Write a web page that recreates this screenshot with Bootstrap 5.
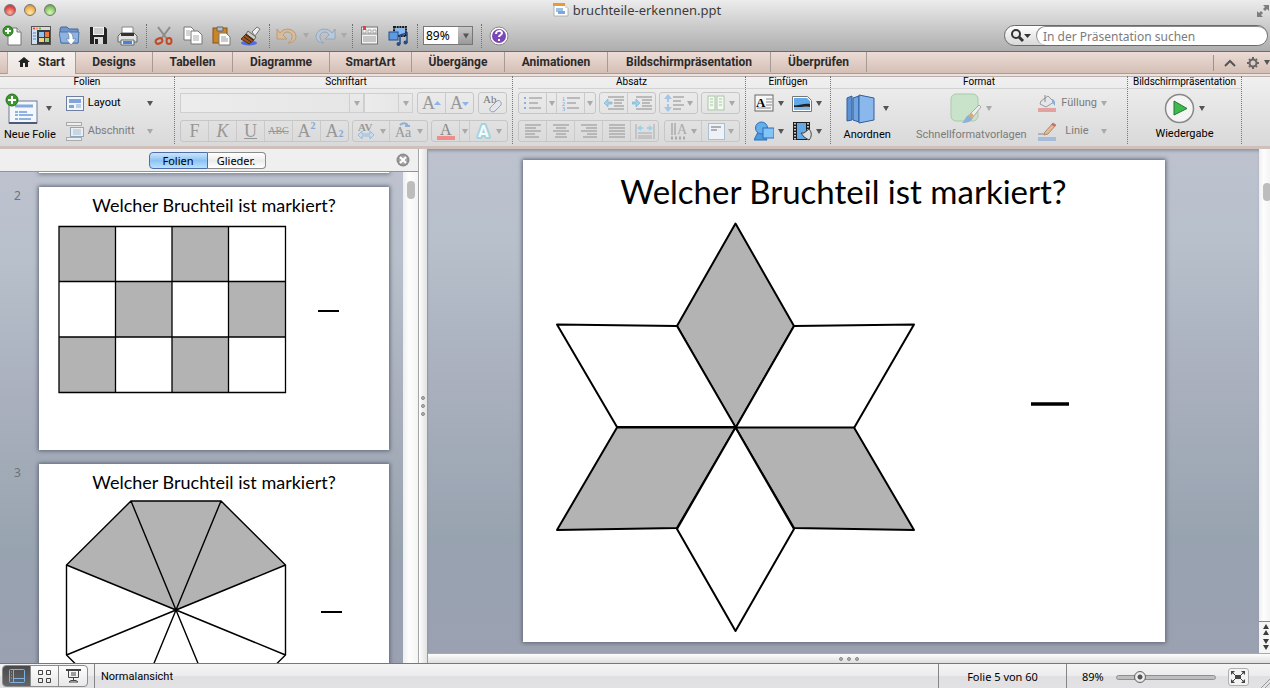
<!DOCTYPE html>
<html lang="de">
<head>
<meta charset="utf-8">
<meta name="viewport" content="width=device-width, initial-scale=1">
<title>bruchteile-erkennen.ppt</title>
<link href="https://cdn.jsdelivr.net/npm/bootstrap@5.3.0/dist/css/bootstrap.min.css" rel="stylesheet">
<style>
  body { font-family: "Noto Sans", "Open Sans", sans-serif; font-size: 11px; line-height: 14px; color: #000; background: #e4e4e4; }
  button { font: inherit; color: inherit; background: none; border: 0; padding: 0; }
  svg { display: block; flex: none; }
  .even { flex: 1 1 0; }
  .chrome { background: linear-gradient(#ececec, #c9c9c9 55%, #aeaeae); border-bottom: 1px solid #6b6b6b; }
  .title-row { height: 20px; font-size: 13px; line-height: 18px; color: #3c3c3c; }
  .light { width: 12px; height: 12px; border-radius: 50%; border: 1px solid #777; }
  .light-r { background: radial-gradient(circle at 50% 75%, #ffb3a8, #e04a44 60%, #a83a36); }
  .light-y { background: radial-gradient(circle at 50% 75%, #ffe7a8, #efae50 60%, #b27d30); }
  .light-g { background: radial-gradient(circle at 50% 75%, #d8f7b8, #85c462 60%, #558a3c); }
  .tool-row { height: 31px; }
  .tool { width: 29px; height: 26px; display: flex; align-items: center; justify-content: center; flex: none; }
  .tool:first-child { width: 26px; }
  .tool-drop { width: 9px; height: 26px; display: flex; align-items: center; justify-content: center; }
  .vdots { width: 5px; height: 24px; border-right: 1px dotted #6f6f6f; flex: none; margin-right: 2px; }
  .dn { display: inline-block; width: 0; height: 0; border: 3px solid transparent; border-top: 5px solid #555; border-bottom: 0; flex: none; }
  .dn.dim { border-top-color: #a9a9a9; }
  .zoom-box { margin-left: -3px; }
  .zoom-select { width: 50px; height: 19px; border: 1px solid #777; font-size: 12px; padding: 0 2px; appearance: none; color: #000;
    background: linear-gradient(#c9c9c9, #999) right / 14px 100% no-repeat, #fff; }
  .search-box { width: 264px; height: 21px; border: 1px solid #6a6a6a; border-radius: 11px; background: linear-gradient(#fff, #d8d8d8); margin-right: 2px; }
  .search-box input { border: 1px solid #8a8a8a; border-width: 1px 0 0 1px; border-radius: 10px; height: 19px; font-size: 12px; padding: 0 6px; background: #fff; outline: 0; margin-left: 2px; }
  .search-box input::placeholder { color: #7c7c7c; }
  .tab-row { height: 22px; background: linear-gradient(#ecdcd5, #d4bfb6); border-bottom: 1px solid #ab9b94; padding-left: 7px; }
  .rtab { height: 20px; padding: 0; font-family: Roboto, sans-serif; font-size: 12px; font-weight: 700; color: #2b2b2b; border-right: 1px solid #a59a96; text-decoration: none; display: flex; align-items: center; justify-content: center; flex: none; }
  .rtab.sel { background: linear-gradient(#f6f2f0, #ebe3df); height: 22px; padding-bottom: 2px; border-left: 1px solid #b9aaa4; }
  .w67 { width: 69px; } .w77 { width: 77px; } .w80 { width: 80px; } .w97 { width: 97px; } .w82 { width: 82px; } .w93 { width: 93px; } .w103 { width: 103px; } .w163 { width: 163px; } .w96 { width: 96px; }
  .ribbon { height: 75px; font-family: Roboto, sans-serif; background: linear-gradient(#f0f0f0, #d9d9d9); border-top: 2px solid #ece2de; border-bottom: 3px solid #cfc0bb; box-shadow: inset 0 1px #b9b0ad; }
  .group { border-right: 1px dotted #777; height: 68px; flex: none; }
  .group > h2 { font-size: 10px; font-weight: 400; line-height: 12px; height: 13px; margin: 0; text-align: center; border-bottom: 1px solid #d2d2d2; white-space: nowrap; }
  .g1 { width: 175px; } .g2 { width: 338px; } .g3 { width: 233px; } .g4 { width: 85px; } .g5 { width: 297px; } .g6 { width: 114px; }
  .g2, .g3 { padding-left: 5px; }
  .rows { display: flex; flex-direction: column; gap: 6px; padding-top: 3px; }
  .rows-slide { padding-left: 10px; padding-right: 21px; }
  .rows-fill { padding-left: 4px; padding-right: 20px; }
  .rrow { height: 22px; }
  .sets { display: flex; gap: 3px; }
  .sets.loose { gap: 5px; }
  .bset { display: flex; height: 22px; border: 1px solid #c6c6c6; border-radius: 3px; flex: none; }
  .bset > button { width: 28px; display: flex; align-items: center; justify-content: center; border-right: 1px solid #cacaca; gap: 3px; font-family: "Liberation Serif", serif; font-size: 18px; line-height: 18px; color: #979797; }
  .bset > button:last-child { border-right: 0; width: 27px; }
  .bset > button.arr, .bset > button.arr:last-child { width: 10px; }
  .bset > button.wide, .bset > button.wide:last-child { width: 37px; }
  .bset > button.abc { font-size: 10px; text-decoration: line-through; }
  .bset sup, .bset sub { font-size: 10px; line-height: 8px; color: #86a7d8; font-weight: 700; margin-left: -3px; }
  .combo { height: 20px; border: 1px solid #cfcfcf; background: linear-gradient(90deg, #ececec, #e6e6e6); border-radius: 0; appearance: none; padding: 0; flex: none; }
  .fontbox { width: 170px; } .sizebox { width: 35px; }
  .combo-arr { width: 14px; height: 20px; border: 1px solid #cfcfcf; border-left: 0; display: flex; align-items: center; justify-content: center; }
  .lbl-dim { color: #7b7b7b; }
  .big-btn { padding-top: 3px; }
  .big-ico { height: 32px; margin-bottom: 3px; display: flex; align-items: center; justify-content: center; }
  .arrange { width: 80px; } .styles { width: 126px; margin-left: 5px; flex: none; }
  .sidepane { width: 418px; flex: none; }
  .side-head { height: 23px; background: #efefef; border-bottom: 1px solid #949494; }
  .seg button { width: 59px; height: 17px; line-height: 15px; border: 1px solid #8b8b8b; background: linear-gradient(#fff, #ececec 50%, #fff); }
  .seg button.sel { background: linear-gradient(#cfe5fa, #8cc3f4 50%, #b9e2fd); border-color: #4d6ea8; border-radius: 4px 0 0 4px; }
  .seg button + button { border-left: 0; border-radius: 0 4px 4px 0; width: 58px; }
  .desk { background: linear-gradient(#bdc2ce, #b7c0cb 18%, #aab0be 45%, #98a3b0 78%, #9ba1b0); }
  .desk-main { box-shadow: inset 0 3px 3px -1px #8f95a5; }
  .thumbs { min-height: 0; }
  .thumb-no { width: 39px; padding: 2px 0 0 14px; font-size: 12px; color: #6f7279; flex: none; }
  .thumb-row { display: flex; flex: none; margin-top: 14px; }
  .sheet { background: #fff; box-shadow: 0 0 4px 1px #5f6675; flex: none; overflow: hidden; }
  .thumb { width: 350px; height: 263px; }
  .thumb-end { width: 350px; height: 1px; margin-left: 39px; }
  .thumb h3 { font: 400 18px/24px Lato, sans-serif; margin: 6px 0 0; text-align: center; }
  .main-sheet { width: 642px; height: 482px; }
  .main-sheet h1 { font: 400 33px/44px Lato, sans-serif; margin: 9px 0 0; text-align: center; }
  .scroll { background: linear-gradient(90deg, #eee, #fdfdfd 40%, #f4f4f4); flex: none; overflow: hidden; }
  .scroll-side { width: 15px; padding: 9px 0 0 4px; }
  .scroll-main { width: 11px; }
  .scroll-main .knob { margin: 34px 0 0 4px; }
  .knob { width: 8px; height: 18px; border-radius: 4px; background: #bdbdbd; flex: none; }
  .vsplit { width: 10px; background: linear-gradient(90deg, #fff, #f1f1f1 40%, #e3e3e3); border-left: 1px solid #a5a5a5; border-right: 1px solid #9a9a9a; flex: none; }
  .hsplit { height: 10px; background: linear-gradient(#fdfdfd, #dedede); border-top: 1px solid #aaa; flex: none; }
  .pip { width: 4px; height: 4px; border-radius: 50%; background: #b2b2b2; border: 1px solid #8a8a8a; }
  .status { height: 25px; border-top: 1px solid #777; background: linear-gradient(#f4f4f5, #ececee 49%, #e0e0e2 51%, #e2e2e4); flex: none; }
  .views { border: 1px solid #8c8c8c; border-radius: 4px; height: 22px; overflow: hidden; background: linear-gradient(#fdfdfd, #e8e8e8); margin: 0 6px 0 2px; }
  .views button { width: 28px; height: 100%; display: flex; align-items: center; justify-content: center; border-right: 1px solid #8c8c8c; }
  .views button:last-child { border-right: 0; }
  .views .sel { background: linear-gradient(#4a4a4c, #66666a); }
  .cell { border-left: 1px solid #858585; height: 100%; padding-top: 2px; display: flex; align-items: center; }
  .cell-view { font-family: Roboto, sans-serif; padding-left: 6px; }
  .cell-page { width: 128px; justify-content: center; }
  .cell-zoom { width: 204px; padding-left: 15px; gap: 12px; }
  .zoomer { appearance: none; width: 100px; height: 14px; background: none; margin: 0; }
  .zoomer::-webkit-slider-runnable-track { height: 5px; border-radius: 3px; border: 1px solid #8f8f8f; background: #bfbfbf; }
  .zoomer::-webkit-slider-thumb { appearance: none; width: 12px; height: 12px; margin-top: -5px; border-radius: 50%; border: 1px solid #666; background: radial-gradient(circle, #555 0 2px, #f4f4f4 3px, #d0d0d0); }
  .fit { width: 23px; height: 18px; border: 1px solid #b0b0b0; border-radius: 3px; background: #f3f3f3; display: flex; align-items: center; justify-content: center; }
  .nudge { height: 32px; border-top: 1px solid #888; background: #f5f5f5; }
</style>
</head>
<body class="vh-100 overflow-hidden d-flex flex-column">

<header class="chrome flex-shrink-0">
  <div class="title-row d-flex">
    <div class="even d-flex gap-2 ps-1 pt-1">
      <span class="light light-r"></span><span class="light light-y"></span><span class="light light-g"></span>
    </div>
    <div class="d-flex align-items-center gap-1">
      <svg width="16" height="14" viewBox="0 0 16 14"><path d="M1 2h11l3 3v8H1z" fill="#fff" stroke="#9aa" stroke-width=".8"/><path d="M0 0h12v3H0z" fill="#e99a33"/><path d="M12 0l3 5h-3z" fill="#ddd"/><rect x="3" y="5" width="7" height="4" fill="#9dbfe8"/><rect x="5" y="8" width="7" height="3" fill="#7da7dc"/></svg>
      <span>bruchteile-erkennen.ppt</span>
    </div>
    <div class="even d-flex justify-content-end pt-1">
      <svg width="14" height="14" viewBox="0 0 14 14" fill="#7d7d7d"><path d="M7 1h6v6l-2-2-2 2-2-2 2-2zM1 7l2 2 2-2 2 2-2 2 2 2H1z"/></svg>
    </div>
  </div>
  <div class="tool-row d-flex align-items-center">
    <button class="tool" aria-label="Neu"><svg width="22" height="22" viewBox="0 0 22 22"><path d="M6 3h9l4 4v13H6z" fill="#fff" stroke="#777"/><path d="M15 3v4h4" fill="#ddd" stroke="#777"/><circle cx="6" cy="6" r="5" fill="#3c9a2c" stroke="#26701b"/><path d="M6 3v6M3 6h6" stroke="#fff" stroke-width="2"/></svg></button>
    <button class="tool" aria-label="Vorlagen"><svg width="20" height="19" viewBox="0 0 20 19"><rect x=".5" y=".5" width="19" height="18" fill="#3b3b3f" stroke="#555"/><rect x="1" y="1" width="18" height="3" fill="#d9d9d9"/><circle cx="3" cy="2.500" r="1" fill="#d33"/><circle cx="6" cy="2.500" r="1" fill="#e93"/><circle cx="9" cy="2.500" r="1" fill="#5a3"/><rect x="1" y="4" width="5" height="14" fill="#cfe0f2"/><path d="M2 7h3M2 10h3M2 13h3" stroke="#5b87c0"/><rect x="8" y="6" width="5" height="5" fill="#8cc4f3"/><rect x="14" y="6" width="4" height="5" fill="#ee7741"/><rect x="8" y="12" width="5" height="4" fill="#f3d27a"/><rect x="14" y="12" width="4" height="4" fill="#9ccf7c"/></svg></button>
    <button class="tool" aria-label="Öffnen"><svg width="21" height="20" viewBox="0 0 21 20"><path d="M1 3l1-2h6l2 2h9v14H2z" fill="#6f97cb" stroke="#44669a"/><path d="M0 6h20l-1 11H2z" fill="#8fb3e0" stroke="#4f74a9"/><path d="M8 6c5 0 6 3 6 7h3l-5 6-5-6h3c0-3 0-5-2-7z" fill="#fff" stroke="#6a84a8" stroke-width=".7"/></svg></button>
    <button class="tool" aria-label="Speichern"><svg width="19" height="19" viewBox="0 0 19 19"><path d="M1 1h15l2 2v15H1z" fill="#232325"/><rect x="4" y="1" width="11" height="8" fill="#f0f0f0"/><path d="M5 3h9M5 5h9M5 7h9" stroke="#aaa"/><rect x="5" y="11" width="9" height="7" fill="#d9d9d9"/><rect x="6" y="13" width="3" height="5" fill="#222"/></svg></button>
    <button class="tool" aria-label="Drucken"><svg width="21" height="20" viewBox="0 0 21 20"><path d="M5 1h11v8H5z" fill="#fff" stroke="#888"/><path d="M1 10l3-3h13l3 3v6H1z" fill="#e2e2e2" stroke="#666"/><path d="M4 7h13v3H4z" fill="#333"/><path d="M4 14h13v5H4z" fill="#eef4fc" stroke="#666"/><path d="M6 15h9v3H6z" fill="#3f86d8"/></svg></button>
    <span class="vdots"></span>
    <button class="tool" aria-label="Ausschneiden"><svg width="20" height="20" viewBox="0 0 20 20" fill="none"><path d="M4 1l9 12M16 1L7 13" stroke="#8c8c8c" stroke-width="2"/><ellipse cx="5" cy="15" rx="3.500" ry="2.500" stroke="#c24a26" stroke-width="2" transform="rotate(-25 5 15)"/><ellipse cx="15" cy="15" rx="2.500" ry="3" stroke="#c24a26" stroke-width="2"/></svg></button>
    <button class="tool" aria-label="Kopieren"><svg width="20" height="19" viewBox="0 0 20 19" fill="#fff" stroke="#777"><path d="M1 1h7l3 3v10H1z"/><path d="M8 5h7l4 4v9H8z"/><path d="M3 5h4M3 7h4M3 9h4M10 10h6M10 12h6M10 14h6" stroke="#aaa"/></svg></button>
    <button class="tool" aria-label="Einfügen"><svg width="19" height="20" viewBox="0 0 19 20"><rect x="1" y="2" width="14" height="15" fill="#cc8526" stroke="#87530f"/><path d="M5 1h6v4H5z" fill="#bbb" stroke="#666"/><path d="M7 7h7l4 4v8H7z" fill="#fff" stroke="#777"/><path d="M9 11h5M9 13h7M9 15h7" stroke="#999"/></svg></button>
    <button class="tool" aria-label="Format übertragen"><svg width="21" height="20" viewBox="0 0 21 20"><ellipse cx="9" cy="17" rx="8" ry="2.500" fill="#4d6fe0"/><path d="M12 6l5-5 3 2-5 7z" fill="#eee" stroke="#777"/><path d="M8 5l8 6-2 3-8-6z" fill="#ccc" stroke="#666"/><path d="M6 8l8 6-5 4-8-5z" fill="#9b5520" stroke="#5d2f0c"/><path d="M4 11l7 5M6 9l7 5" stroke="#3c2410"/></svg></button>
    <span class="vdots"></span>
    <button class="tool" aria-label="Rückgängig"><svg width="22" height="18" viewBox="0 0 22 18"><path d="M1 2l3 4C8 0 19 1 20 9c0 4-3 7-8 7 5-2 6-10 0-11-3 0-4 1-5 3l4 4H1z" fill="#d7bb9a" stroke="#b99b78"/></svg></button>
    <button class="tool-drop" aria-label="Verlauf"><span class="dn dim"></span></button>
    <button class="tool" aria-label="Wiederholen"><svg width="22" height="18" viewBox="0 0 22 18"><path d="M21 2l-3 4C14 0 3 1 2 9c0 4 3 7 8 7-5-2-6-10 0-11 3 0 4 1 5 3l-4 4h10z" fill="#b9c9da" stroke="#92a6bb"/></svg></button>
    <button class="tool-drop" aria-label="Verlauf"><span class="dn dim"></span></button>
    <span class="vdots"></span>
    <button class="tool" aria-label="Formatierungspalette"><svg width="17" height="19" viewBox="0 0 17 19"><rect x=".5" y="1" width="16" height="17" fill="#f3f3f3" stroke="#777"/><path d="M1 8h15" stroke="#888"/><path d="M2 3h3v4H2zM7 4h3v3H7zM12 4h3v3h-3z" fill="#fff" stroke="#888" stroke-width=".7"/><path d="M2 0h3v4H2z" fill="#d44"/><path d="M2 11h13M2 13h13M2 15h13" stroke="#999"/></svg></button>
    <button class="tool" aria-label="Medien"><svg width="21" height="20" viewBox="0 0 21 20"><rect x="6" y="1" width="12" height="9" fill="#8ab8ee" stroke="#1a1a1a" stroke-width="2" stroke-dasharray="2 .7"/><rect x="1" y="6" width="9" height="8" fill="#5d9ae0" stroke="#234f8c"/><path d="M12 18V9l7-2v10" fill="none" stroke="#234d8a" stroke-width="1.500"/><circle cx="10.500" cy="18" r="2" fill="#234d8a"/><circle cx="17.500" cy="16.500" r="2" fill="#234d8a"/></svg></button>
    <span class="vdots me-2"></span>
    <div class="zoom-box position-relative">
      <select class="zoom-select d-block" aria-label="Zoom"><option>89%</option></select>
      <span class="dn position-absolute end-0 top-50 translate-middle-y me-1 pe-none"></span>
    </div>
    <span class="vdots ms-1"></span>
    <button class="tool" aria-label="Hilfe"><svg width="20" height="20" viewBox="0 0 20 20"><circle cx="10" cy="10" r="9" fill="#fff" stroke="#888"/><circle cx="10" cy="10" r="7" fill="#7a46b8"/><path d="M7 8c0-4 6-4 6-1 0 2-3 2-3 4M10 13v2" fill="none" stroke="#fff" stroke-width="2"/></svg></button>
    <div class="search-box d-flex align-items-center ms-auto">
      <svg class="ms-1" width="25" height="16" viewBox="0 0 25 16"><circle cx="7" cy="6" r="4" fill="none" stroke="#333" stroke-width="2"/><path d="M10 9l4 4" stroke="#333" stroke-width="3"/><path d="M15 6h7l-3.500 4z" fill="#333"/></svg>
      <input type="search" class="flex-grow-1" placeholder="In der Präsentation suchen" aria-label="In der Präsentation suchen">
    </div>
  </div>
</header>

<nav class="tab-row d-flex flex-shrink-0">
  <a href="#" class="rtab sel w67 gap-2"><svg width="12" height="10" viewBox="0 0 12 10"><path d="M6 0l6 5h-2v5H7V6H5v4H2V5H0z" fill="#222"/></svg>Start</a>
  <a href="#" class="rtab w77">Designs</a>
  <a href="#" class="rtab w80">Tabellen</a>
  <a href="#" class="rtab w97">Diagramme</a>
  <a href="#" class="rtab w82">SmartArt</a>
  <a href="#" class="rtab w93">Übergänge</a>
  <a href="#" class="rtab w103">Animationen</a>
  <a href="#" class="rtab w163">Bildschirmpräsentation</a>
  <a href="#" class="rtab w96">Überprüfen</a>
  <div class="ms-auto d-flex align-items-center">
    <button class="me-2" aria-label="Menüband ausblenden"><svg width="28" height="18" viewBox="0 0 28 18"><path d="M3.500 1v16" stroke="#9b918e"/><path d="M15 12l5-5 5 5" fill="none" stroke="#555" stroke-width="2"/></svg></button>
    <button class="d-flex align-items-center gap-1" aria-label="Einstellungen"><svg width="14" height="14" viewBox="0 0 14 14"><circle cx="7" cy="7" r="3.500" fill="none" stroke="#666" stroke-width="2"/><path d="M7 1v2M7 11v2M1 7h2M11 7h2M3 3l1 1M10 10l1 1M11 3l-1 1M3 11l1-1" stroke="#666" stroke-width="2"/></svg><span class="dn"></span></button>
  </div>
</nav>

<section class="ribbon d-flex flex-shrink-0">
  <div class="group g1">
    <h2>Folien</h2>
    <div class="d-flex">
      <button class="big-btn ps-1 text-nowrap text-start">
        <span class="big-ico justify-content-start gap-2"><svg width="34" height="32" viewBox="0 0 34 32"><rect x="5" y="8" width="28" height="22" fill="#f4f7fb" stroke="#6f7b97"/><path d="M5 30h28" stroke="#4e5a7c" stroke-width="2"/><path d="M11 13h18" stroke="#86a9dd" stroke-width="3"/><path d="M11 19h3M11 22h3M11 26h3M15 19h8M15 22h14M15 26h12" stroke="#6e9bd9" stroke-width="1.500"/><circle cx="8" cy="7" r="6" fill="#3c9a2c" stroke="#26701b"/><path d="M8 3v8M4 7h8" stroke="#fff" stroke-width="2"/></svg><span class="dn"></span></span>
        <span class="d-block">Neue Folie</span>
      </button>
      <div class="rows rows-slide flex-grow-1">
        <button class="rrow d-flex align-items-center gap-1"><svg width="18" height="15" viewBox="0 0 18 15"><rect x=".5" y=".5" width="17" height="14" fill="#f2f6fb" stroke="#6c7f9f"/><path d="M3 3h12v4H3zM3 9h5v3H3z" fill="#7fa5dc"/><path d="M10 9h5M10 11h5" stroke="#7fa5dc"/></svg><span>Layout</span><span class="dn ms-auto"></span></button>
        <button class="rrow d-flex align-items-center gap-1 lbl-dim"><svg width="18" height="19" viewBox="0 0 18 19" fill="#eee" stroke="#aaa"><rect x=".5" y=".5" width="15" height="3"/><rect x="4.500" y="5.500" width="13" height="9" stroke="#8fa6bd"/><rect x=".5" y="15.500" width="15" height="3"/><path d="M7 8h8M7 10h8M7 12h8" stroke="#9dc0d8"/></svg><span>Abschnitt</span><span class="dn dim ms-auto"></span></button>
      </div>
    </div>
  </div>

  <div class="group g2">
    <h2>Schriftart</h2>
    <div class="rows">
    <div class="rrow d-flex align-items-center">
      <input class="combo fontbox" aria-label="Schriftart"><button class="combo-arr" aria-label="Schriftart wählen"><span class="dn dim"></span></button>
      <input class="combo sizebox" aria-label="Schriftgrad"><button class="combo-arr" aria-label="Schriftgrad wählen"><span class="dn dim"></span></button>
      <div class="bset ms-1"><button aria-label="Schrift vergrößern"><svg width="20" height="18" viewBox="0 0 20 18"><text x="0" y="15" font-size="18" fill="#979797">A</text><path d="M12 11l3.500-4 3.500 4z" fill="#8fb3e6"/></svg></button><button aria-label="Schrift verkleinern"><svg width="20" height="18" viewBox="0 0 20 18"><text x="0" y="15" font-size="18" fill="#979797">A</text><path d="M12 8l3.500 4L19 8z" fill="#8fb3e6"/></svg></button></div>
      <div class="bset ms-1"><button aria-label="Formatierung löschen"><svg width="20" height="19" viewBox="0 0 20 19"><text x="0" y="9" font-size="11" fill="#777">Ab</text><path d="M7 14l7-7c3-2 5 2 4 4l-6 6c-3 2-6 0-5-3z" fill="#e5e6ec" stroke="#999faf"/></svg></button></div>
    </div>
    <div class="sets">
      <div class="bset"><button>F</button><button><i>K</i></button><button><u>U</u></button><button class="abc">ABC</button><button>A<sup>2</sup></button><button>A<sub>2</sub></button></div>
      <div class="bset"><button class="wide" aria-label="Zeichenabstand"><svg width="20" height="18" viewBox="0 0 20 18"><text x="1" y="9" font-size="11" font-weight="700" fill="#999">AV</text><path d="M1 13l4-4v3h8V9l4 4-4 4v-3H5v3z" fill="#c6dcf0" stroke="#91b1d6" stroke-width=".8"/></svg><span class="dn dim"></span></button><button class="wide" aria-label="Groß-/Kleinschreibung"><svg width="20" height="20" viewBox="0 0 20 20"><text x="1" y="16" font-size="14" fill="#999">Aa</text><path d="M6 4c3-3 7-2 8 1M11 5h5" fill="none" stroke="#8db0d8" stroke-width="2"/></svg><span class="dn dim"></span></button></div>
      <div class="bset"><button aria-label="Schriftfarbe"><svg width="18" height="20" viewBox="0 0 18 20"><text x="3" y="14" font-size="16" fill="#888">A</text><rect y="15" width="18" height="4" fill="#ee8d8a"/></svg></button><button class="arr" aria-label="Farbe wählen"><span class="dn dim"></span></button><button class="wide" aria-label="Texteffekte"><svg width="18" height="18" viewBox="0 0 18 18"><text x="3" y="15" font-size="16" font-weight="700" font-family="Roboto" fill="#f4fbfc" stroke="#a5d3dd" stroke-width="4" stroke-linejoin="round" paint-order="stroke">A</text></svg><span class="dn dim"></span></button></div>
    </div>
    </div>
  </div>

  <div class="group g3">
    <h2>Absatz</h2>
    <div class="rows">
    <div class="sets">
      <div class="bset"><button aria-label="Aufzählung"><svg width="18" height="14" viewBox="0 0 18 14"><path d="M0 2h2M0 7h2M0 12h2" stroke="#8caede" stroke-width="2"/><path d="M5 2h13M5 7h9M5 12h12" stroke="#aaa" stroke-width="1.500"/></svg></button><button class="arr" aria-label="Aufzählung wählen"><span class="dn dim"></span></button><button aria-label="Nummerierung"><svg width="18" height="15" viewBox="0 0 18 15"><text y="5" font-size="6" fill="#6c9be0">1</text><text y="10" font-size="6" fill="#6c9be0">2</text><text y="15" font-size="6" fill="#6c9be0">3</text><path d="M5 2h13M5 7h9M5 12h12" stroke="#aaa" stroke-width="1.500"/></svg></button><button class="arr" aria-label="Nummerierung wählen"><span class="dn dim"></span></button></div>
      <div class="bset"><button aria-label="Einzug verkleinern"><svg width="20" height="14" viewBox="0 0 20 14"><path d="M4 1h16M10 4h10M10 7h8M10 10h10M4 13h16" stroke="#aaa" stroke-width="1.500"/><path d="M0 7l4-4v3h4v2H4v3z" fill="#9dd0ea" stroke="#76aed0" stroke-width=".6"/></svg></button><button aria-label="Einzug vergrößern"><svg width="20" height="14" viewBox="0 0 20 14"><path d="M4 1h16M10 4h10M10 7h8M10 10h10M4 13h16" stroke="#aaa" stroke-width="1.500"/><path d="M8 7L4 3v3H0v2h4v3z" fill="#9dd0ea" stroke="#76aed0" stroke-width=".6"/></svg></button></div>
      <div class="bset"><button class="wide" aria-label="Zeilenabstand"><svg width="20" height="18" viewBox="0 0 20 18"><path d="M4 0l4 5H5v3H3V5H0zM4 18l4-5H5v-3H3v3H0z" fill="#a5c6e5"/><path d="M9 3h11M9 7h8M9 11h11M9 15h8" stroke="#aaa" stroke-width="1.500"/></svg><span class="dn dim"></span></button></div>
      <div class="bset"><button class="wide" aria-label="Spalten"><svg width="19" height="16" viewBox="0 0 19 16" fill="#f5f7f4" stroke="#a6c8a0"><rect x="1" y="1" width="7" height="14"/><rect x="10" y="1" width="7" height="14"/><path d="M3 4h3M3 7h3M3 10h3M12 4h3M12 7h3M12 10h3"/></svg><span class="dn dim"></span></button></div>
    </div>
    <div class="sets loose">
      <div class="bset">
        <button aria-label="Linksbündig"><svg width="16" height="14" viewBox="0 0 16 14" stroke="#aaa" stroke-width="1.500"><path d="M0 1h16M0 4h11M0 7h16M0 10h10M0 13h14"/></svg></button>
        <button aria-label="Zentriert"><svg width="16" height="14" viewBox="0 0 16 14" stroke="#aaa" stroke-width="1.500"><path d="M0 1h16M3 4h10M0 7h16M3 10h10M2 13h12"/></svg></button>
        <button aria-label="Rechtsbündig"><svg width="16" height="14" viewBox="0 0 16 14" stroke="#aaa" stroke-width="1.500"><path d="M0 1h16M5 4h11M0 7h16M6 10h10M2 13h14"/></svg></button>
        <button aria-label="Blocksatz"><svg width="16" height="14" viewBox="0 0 16 14" stroke="#aaa" stroke-width="1.500"><path d="M0 1h16M0 4h16M0 7h16M0 10h16M0 13h16"/></svg></button>
        <button aria-label="Verteilt"><svg width="20" height="15" viewBox="0 0 20 15"><path d="M1 0v15M19 0v15" stroke="#aaa"/><path d="M2 4l4-3v2h2v2H6v2zM18 4l-4-3v2h-2v2h2v2z" fill="#9dd0ea"/><path d="M3 9h14M3 12h14M3 14h14" stroke="#aaa"/></svg></button>
      </div>
      <div class="bset"><button class="wide" aria-label="Textrichtung"><svg width="18" height="17" viewBox="0 0 18 17"><path d="M2 0v12M5 0v12" stroke="#aaa" stroke-width="1.500"/><text x="7" y="11" font-size="14" fill="#aaa">A</text><path d="M1 15h16" stroke="#aaa" stroke-width="3" stroke-dasharray="2"/></svg><span class="dn dim"></span></button><button class="wide" aria-label="Text ausrichten"><svg width="17" height="17" viewBox="0 0 17 17"><rect x=".5" y=".5" width="16" height="16" fill="#eef1f5" stroke="#a9bfd6"/><path d="M3 4h10M3 7h6" stroke="#999" stroke-width="1.500"/></svg><span class="dn dim"></span></button></div>
    </div>
    </div>
  </div>

  <div class="group g4">
    <h2>Einfügen</h2>
    <div class="rows px-1">
      <div class="d-flex justify-content-around">
      <button class="d-flex align-items-center gap-1 rrow" aria-label="Textfeld"><svg width="20" height="18" viewBox="0 0 20 18"><rect x="1" y="1" width="18" height="16" fill="#f6f6f6" stroke="#666"/><text x="2" y="13" font-size="13" font-weight="700" font-family="Liberation Serif">A</text><path d="M12 5h6M12 8h6M12 11h6M3 14h14" stroke="#888"/></svg><span class="dn"></span></button>
      <button class="d-flex align-items-center gap-1 rrow" aria-label="Bild"><svg width="20" height="17" viewBox="0 0 20 17"><path d="M.5 1.500h15l4 4v11H.5z" fill="#fff" stroke="#777"/><path d="M2 3h13l3 3v4H2z" fill="#5fa8ea"/><path d="M2 10c5 1 9-2 16-1v3c-6-1-10 1-16 0z" fill="#222"/><path d="M2 12h16v3H2z" fill="#78b8ee"/></svg><span class="dn"></span></button>
      </div>
      <div class="d-flex justify-content-around">
      <button class="d-flex align-items-center gap-1 rrow" aria-label="Form"><svg width="20" height="20" viewBox="0 0 20 20" stroke="#2a6fb5"><path d="M6 7L0 19h13z" fill="#4a9be0"/><circle cx="7.500" cy="7" r="6" fill="#64aeea"/><rect x="9" y="7" width="11" height="10" fill="#82c4f5"/></svg><span class="dn"></span></button>
      <button class="d-flex align-items-center gap-1 rrow" aria-label="Medien"><svg width="20" height="20" viewBox="0 0 20 20"><rect x="1" y="1" width="17" height="18" fill="#1d1d1d"/><rect x="5" y="2" width="9" height="16" fill="#62a9e6"/><path d="M3 2v17M16 2v17" stroke="#fff" stroke-width="1.500" stroke-dasharray="1.500"/><path d="M9 12h3l5-4c3 3 3 8 0 11l-5-3z" fill="#ddd" stroke="#444"/></svg><span class="dn"></span></button>
      </div>
    </div>
  </div>

  <div class="group g5">
    <h2>Format</h2>
    <div class="d-flex">
      <button class="big-btn arrange">
        <span class="big-ico gap-2"><svg width="30" height="30" viewBox="0 0 30 30" stroke="#2e5f9f"><path d="M2 4l5-2v24l-5 1z" fill="#5b92d6"/><path d="M8 4l6-2v26l-6-2z" fill="#6fa5e2"/><path d="M14 1l15 3v22l-15 3z" fill="#8bb8ec"/></svg><span class="dn"></span></span>
        <span class="d-block">Anordnen</span>
      </button>
      <button class="big-btn styles lbl-dim">
        <span class="big-ico gap-1"><svg width="32" height="31" viewBox="0 0 32 31"><rect x="1" y="1" width="27" height="27" rx="5" fill="#c9e2ca" stroke="#a5cda8"/><path d="M20 21l9-9 2 2-8 10z" fill="#eee" stroke="#aaa"/><path d="M12 30c3-2 3-7 7-8l4 3c-2 4-6 5-11 5z" fill="#8db0d8"/><path d="M18 22l4-2 2 3-2 3z" fill="#d9ab7c"/></svg><span class="dn dim"></span></span>
        <span class="d-block">Schnellformatvorlagen</span>
      </button>
      <div class="rows rows-fill flex-grow-1 lbl-dim">
        <button class="rrow d-flex align-items-center gap-1"><svg width="19" height="18" viewBox="0 0 19 18"><path d="M3 7l7-5 6 6-8 5-6-3z" fill="#e4e8ec" stroke="#999"/><path d="M7 1v7" stroke="#888"/><path d="M14 5c4 1 3 5 3 7l-3-4z" fill="#85aed7"/><rect y="14" width="18" height="4" fill="#e2a3a0"/></svg>Füllung<span class="dn dim ms-auto"></span></button>
        <button class="rrow d-flex align-items-center gap-1"><svg width="19" height="20" viewBox="0 0 19 20"><path d="M7 11l8-9 3 2-8 9-4 1z" fill="#e7b98f" stroke="#a98c7a"/><path d="M14 3l3 2" stroke="#c66" stroke-width="2"/><path d="M0 13h6" stroke="#888"/><rect y="16" width="18" height="4" fill="#a5bcdb"/></svg><span class="ms-1">Linie</span><span class="dn dim ms-auto"></span></button>
      </div>
    </div>
  </div>

  <div class="group g6">
    <h2>Bildschirmpräsentation</h2>
    <button class="big-btn d-block mx-auto">
      <span class="big-ico gap-1"><svg width="31" height="31" viewBox="0 0 31 31"><circle cx="15.500" cy="15.500" r="14" fill="#f4f4f4" stroke="#888" stroke-width="1.500"/><path d="M10 8l13 7.500L10 22z" fill="#3dbb4b" stroke="#27753a"/></svg><span class="dn"></span></span>
      <span class="d-block">Wiedergabe</span>
    </button>
  </div>
</section>

<main class="d-flex flex-grow-1 thumbs">
  <aside class="sidepane d-flex flex-column thumbs">
    <div class="side-head d-flex align-items-center flex-shrink-0">
      <div class="even ps-1"></div>
      <div class="seg d-flex"><button class="sel">Folien</button><button>Glieder.</button></div>
      <div class="even d-flex justify-content-end pe-2"><button aria-label="Schließen"><svg width="14" height="14" viewBox="0 0 14 14"><circle cx="7" cy="7" r="6.500" fill="#8d8d8d"/><circle cx="7" cy="7" r="4.500" fill="#a8a8a8"/><path d="M4 4l6 6M10 4l-6 6" stroke="#fff" stroke-width="2"/></svg></button></div>
    </div>
    <div class="d-flex flex-grow-1 thumbs">
      <div class="desk flex-grow-1 overflow-hidden d-flex flex-column">
        <div class="sheet thumb-end"></div>
        <div class="thumb-row">
          <span class="thumb-no">2</span>
          <div class="sheet thumb"><h3>Welcher Bruchteil ist markiert?</h3>
            <svg width="350" height="233" viewBox="39 217 350 233"><g fill="#b3b3b3"><path d="M59 227h57v55H59zM172 227h57v55h-57zM116 282h56v55h-56zM229 282h57v55h-57zM59 337h57v55H59zM172 337h57v55h-57z"/></g><path d="M59 226.500h226.500v166H59zM59 281.500h226.500M59 337h226.500M115.500 226.500v166M172 226.500v166M228.500 226.500v166" fill="none" stroke="#000" stroke-width="1.300"/><path d="M318 311h21" stroke="#000" stroke-width="2"/></svg>
          </div>
        </div>
        <div class="thumb-row">
          <span class="thumb-no">3</span>
          <div class="sheet thumb"><h3>Welcher Bruchteil ist markiert?</h3>
            <svg width="350" height="233" viewBox="39 494 350 233"><path d="M66.500 565L131 501h90l64.500 64L176 610.500z" fill="#b3b3b3"/><path d="M131 501h90l64.500 64v90L221 719h-90l-64.500-64v-90zM131 501l90 218M221 501l-90 218M66.500 565l219 90M285.500 565l-219 90" fill="none" stroke="#000" stroke-width="1.400"/><path d="M321 612h21" stroke="#000" stroke-width="2"/></svg>
          </div>
        </div>
      </div>
      <div class="scroll scroll-side"><div class="knob"></div></div>
    </div>
  </aside>
  <div class="vsplit d-flex flex-column align-items-center justify-content-center gap-1"><span class="pip"></span><span class="pip"></span><span class="pip"></span></div>
  <div class="flex-grow-1 d-flex flex-column thumbs">
    <div class="d-flex flex-grow-1 thumbs">
      <div class="desk desk-main flex-grow-1 d-flex align-items-center justify-content-center overflow-hidden">
        <div class="sheet main-sheet"><h1>Welcher Bruchteil ist markiert?</h1>
          <svg width="642" height="429" viewBox="523 213 642 429"><g stroke="#000" stroke-width="2" stroke-linejoin="round"><path d="M735.500 223.500L794 326l-58.500 102L677 326z" fill="#b3b3b3"/><path d="M677 326l-120-1.500L617 427h118.500zM794 326l120-1.500L854 428H735.500z" fill="#fff"/><path d="M735.500 427.500H617L557 530l120-2zM735.500 427.500H854L914 530l-120-2z" fill="#b3b3b3"/><path d="M735.500 427.500L794 529l-58.500 102L677 529z" fill="#fff"/></g><path d="M1031 404h38" stroke="#000" stroke-width="3.500"/></svg>
        </div>
      </div>
      <div class="scroll scroll-main d-flex flex-column"><div class="knob"></div>
        <div class="nudge mt-auto"><svg width="11" height="30" viewBox="0 0 11 30" fill="#3c3c3c"><path d="M7 2l3 5H4zM7 8l3 5H4zM4 17h6l-3 5zM4 23h6l-3 5z"/></svg></div>
      </div>
    </div>
    <div class="hsplit d-flex align-items-center justify-content-center gap-1"><span class="pip"></span><span class="pip"></span><span class="pip"></span></div>
  </div>
</main>

<footer class="status d-flex align-items-center">
  <div class="views d-flex">
    <button class="sel" aria-label="Normalansicht"><svg width="16" height="14" viewBox="0 0 16 14" fill="none" stroke="#7fb0e2"><rect x=".5" y=".5" width="15" height="13" rx="1"/><path d="M4.500 0v14M4 9.500h12M2 3h1M2 6h1M2 9h1"/></svg></button>
    <button aria-label="Foliensortierung"><svg width="14" height="14" viewBox="0 0 14 14" fill="none" stroke="#444"><path d="M.5 1.500h4v4h-4zM8.500 1.500h4v4h-4zM.5 9.500h4v4h-4zM8.500 9.500h4v4h-4z"/></svg></button>
    <button aria-label="Bildschirmpräsentation"><svg width="15" height="14" viewBox="0 0 15 14" fill="none" stroke="#444"><path d="M0 1h15" stroke-width="2"/><path d="M2.500 1v7.500h10V1M5 4h5M5 6h5M7.500 8v3M3 13l2-1.500h5l2 1.500z"/></svg></button>
  </div>
  <div class="cell cell-view flex-grow-1">Normalansicht</div>
  <div class="cell cell-page">Folie 5 von 60</div>
  <div class="cell cell-zoom"><span>89%</span><input type="range" class="zoomer" min="0" max="100" value="20" aria-label="Zoom"><button class="fit" aria-label="An Fenster anpassen"><svg width="14" height="12" viewBox="0 0 14 12"><rect x="4" y="4" width="6" height="4" fill="#444"/><path d="M0 0h4L0 4zM14 0v4l-4-4zM0 12V8l4 4zM14 12h-4l4-4z" fill="#444"/><path d="M1 1l4 4M13 1L9 5M1 11l4-4M13 11L9 7" stroke="#444"/></svg></button>
    <svg class="ms-auto align-self-end" width="9" height="9" viewBox="0 0 9 9"><path d="M0 9l9-9M4 9l5-5" stroke="#999"/></svg></div>
</footer>
<script src="https://cdn.jsdelivr.net/npm/bootstrap@5.3.0/dist/js/bootstrap.bundle.min.js"></script>
</body>
</html>
